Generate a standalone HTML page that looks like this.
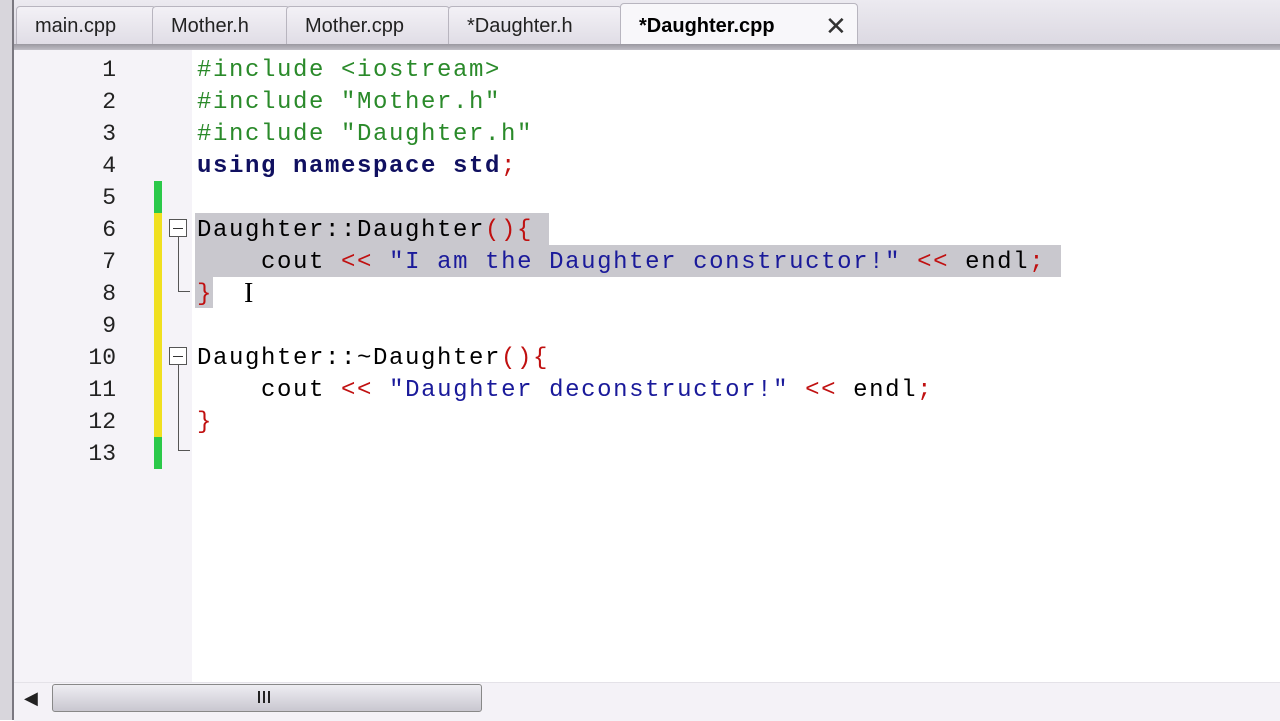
<!DOCTYPE html>
<html><head><style>
body{margin:0;width:1280px;height:720px;overflow:hidden;background:#fff;position:relative;font-family:"Liberation Sans",sans-serif}
.abs{position:absolute}
.tabs{left:0;top:0;width:1280px;height:44px;background:linear-gradient(#eceaf0,#dcd9e2)}
.tab{position:absolute;top:6px;height:38px;background:linear-gradient(#f3f1f6,#e0dde6);border:1px solid #b8b5bf;border-bottom:none;border-radius:4px 4px 0 0;font-size:20px;color:#222;line-height:38px;box-sizing:border-box;padding-left:18px}
.code{font-family:"Liberation Mono",monospace;font-size:24px;letter-spacing:1.6px;line-height:32px;white-space:pre}
.ln{position:absolute;left:40px;width:76px;text-align:right;font-family:"Liberation Mono",monospace;font-size:23px;color:#222;line-height:32px}
.g{color:#2a8a2a}.b{color:#1a1a9a}.r{color:#c01010}.k{color:#101060;font-weight:bold}
.sel{position:absolute;background:#c9c8ce}
</style></head><body>
<div class="abs" style="left:0;top:0;width:12px;height:720px;background:#d8d6dc;border-right:2px solid #7a7880"></div>
<div class="abs tabs" style="left:14px;width:1266px"></div>
<div class="tab" style="left:16px;width:140px">main.cpp</div>
<div class="tab" style="left:152px;width:138px">Mother.h</div>
<div class="tab" style="left:286px;width:164px">Mother.cpp</div>
<div class="tab" style="left:448px;width:174px">*Daughter.h</div>
<div class="tab" style="left:620px;top:3px;height:42px;width:238px;background:#f8f7fa;font-weight:bold;line-height:44px;color:#000">*Daughter.cpp<span style="position:absolute;left:204px;font-weight:normal;font-size:26px;color:#333">✕</span></div>
<div class="abs" style="left:14px;top:44px;width:1266px;height:6px;background:linear-gradient(#9a98a0,#c0bec6)"></div>
<div class="abs" style="left:14px;top:50px;width:178px;height:632px;background:#f5f3f8"></div>
<div class="abs" style="left:154px;top:181px;width:8px;height:32px;background:#2bc94a"></div>
<div class="abs" style="left:154px;top:213px;width:8px;height:224px;background:#f0e020"></div>
<div class="abs" style="left:154px;top:437px;width:8px;height:32px;background:#2bc94a"></div>
<div class="sel" style="left:195px;top:213px;width:354px;height:32px"></div>
<div class="sel" style="left:195px;top:245px;width:866px;height:32px"></div>
<div class="sel" style="left:195px;top:277px;width:18px;height:31px"></div>
<div class="abs" style="left:169px;top:219px;width:18px;height:18px;border:1px solid #555;box-sizing:border-box;background:#fff"><div class="abs" style="left:3px;top:8px;width:10px;height:1px;background:#333"></div></div>
<div class="abs" style="left:178px;top:237px;width:1px;height:55px;background:#555"></div>
<div class="abs" style="left:178px;top:291px;width:12px;height:1px;background:#555"></div>
<div class="abs" style="left:169px;top:347px;width:18px;height:18px;border:1px solid #555;box-sizing:border-box;background:#fff"><div class="abs" style="left:3px;top:8px;width:10px;height:1px;background:#333"></div></div>
<div class="abs" style="left:178px;top:365px;width:1px;height:86px;background:#555"></div>
<div class="abs" style="left:178px;top:450px;width:12px;height:1px;background:#555"></div>
<div class="ln" style="top:54px">1<br>2<br>3<br>4<br>5<br>6<br>7<br>8<br>9<br>10<br>11<br>12<br>13</div>
<div class="abs code" style="left:197px;top:55px"><span class="g">#include &lt;iostream&gt;</span>
<span class="g">#include "Mother.h"</span>
<span class="g">#include "Daughter.h"</span>
<span class="k">using namespace std</span><span class="r">;</span>

Daughter::Daughter<span class="r">(){</span>
    cout <span class="r">&lt;&lt;</span> <span class="b">"I am the Daughter constructor!"</span> <span class="r">&lt;&lt;</span> endl<span class="r">;</span>
<span class="r">}</span>

Daughter::~Daughter<span class="r">(){</span>
    cout <span class="r">&lt;&lt;</span> <span class="b">"Daughter deconstructor!"</span> <span class="r">&lt;&lt;</span> endl<span class="r">;</span>
<span class="r">}</span>
</div>
<div class="abs" style="left:244px;top:278px;width:14px;height:32px;font-size:28px;font-family:'Liberation Serif',serif;color:#000;line-height:32px">I</div>
<div class="abs" style="left:14px;top:682px;width:1266px;height:38px;background:#f4f2f7;border-top:1px solid #e4e2e8"></div>
<div class="abs" style="left:24px;top:688px;font-size:18px;color:#222">&#9664;</div>
<div class="abs" style="left:52px;top:684px;width:430px;height:28px;border:1px solid #888;border-radius:3px;box-sizing:border-box;background:linear-gradient(#eeedf2,#c9c7d0)"></div>
<div class="abs" style="left:258px;top:691px;width:2px;height:12px;background:#222;box-shadow:5px 0 #222,10px 0 #222"></div>
</body></html>
